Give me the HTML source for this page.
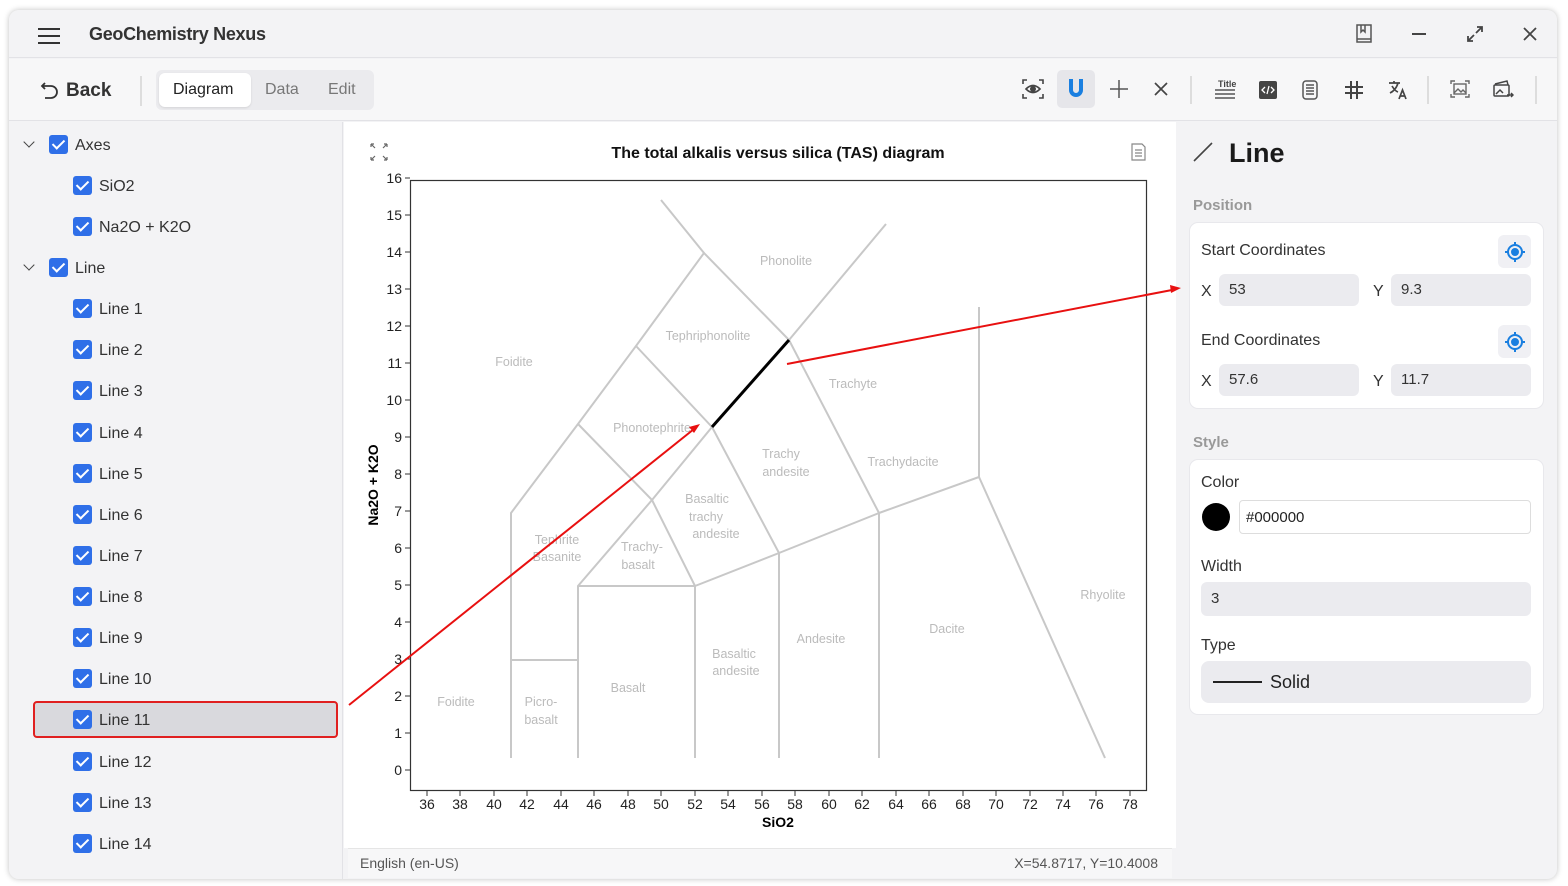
<!DOCTYPE html>
<html><head><meta charset="utf-8"><style>
*{box-sizing:border-box;margin:0;padding:0}
body{width:1568px;height:886px;background:#fff;font-family:"Liberation Sans",sans-serif;position:relative;overflow:hidden;color:#222}
.win{position:absolute;left:9px;top:10px;width:1548px;height:869px;background:#f3f3f5;border-radius:10px;box-shadow:0 0 6px rgba(0,0,0,.25);overflow:hidden}
.abs{position:absolute}
.cb{position:absolute;width:19px;height:19px;background:#2f6fe8;border-radius:3px}
.cb:after{content:"";position:absolute;left:6px;top:2px;width:5px;height:10px;border:solid #fff;border-width:0 2.5px 2.5px 0;transform:rotate(45deg)}
.row{position:absolute;font-size:16px;color:#333;margin-top:2px}
.chev{position:absolute;width:8px;height:8px;border:solid #444;border-width:0 1.8px 1.8px 0;transform:rotate(45deg)}
.inp{position:absolute;background:#ebebef;border-radius:6px;font-size:15px;color:#333;padding-left:10px;line-height:32px}
.lbl{position:absolute;font-size:16px;color:#333;margin-top:1px}
</style></head><body>
<div class="win">
 <div class="abs" style="left:0;top:0;width:1548px;height:48px;background:#f3f3f5;border-bottom:1px solid #e2e2e6"></div>
 <svg class="abs" style="left:28px;top:17px" width="24" height="18"><path d="M1 2h22M1 9h22M1 16h22" stroke="#333" stroke-width="2"/></svg>
 <div class="abs" style="left:80px;top:14px;font-size:18px;font-weight:bold;color:#333;letter-spacing:-0.3px">GeoChemistry Nexus</div>
 <svg class="abs" style="left:1346px;top:14px" width="18" height="20" fill="none" stroke="#555" stroke-width="1.5"><path d="M2 1h14v17H2z M2 15h14 M6 1v7l2-2 2 2V1"/></svg>
 <svg class="abs" style="left:1402px;top:22px" width="16" height="4"><path d="M1 2h14" stroke="#444" stroke-width="2"/></svg>
 <svg class="abs" style="left:1457px;top:15px" width="18" height="18" fill="none" stroke="#444" stroke-width="1.8"><path d="M10 8l6-6M11 2h5v5M8 10l-6 6M2 11v5h5"/></svg>
 <svg class="abs" style="left:1513px;top:16px" width="16" height="16" stroke="#444" stroke-width="1.8"><path d="M2 2l12 12M14 2L2 14"/></svg>
 <div class="abs" style="left:0;top:49px;width:1548px;height:62px;background:#f7f7f8;border-bottom:1px solid #e2e2e6"></div>
 <svg class="abs" style="left:31px;top:70px" width="20" height="20" fill="none" stroke="#333" stroke-width="1.8"><path d="M5 3L2 6l3 3M2 6h9a6 6 0 0 1 0 12H5"/></svg>
 <div class="abs" style="left:57px;top:70px;font-size:19px;font-weight:bold;color:#333">Back</div>
 <div class="abs" style="left:131px;top:66px;width:2px;height:30px;background:#ddd"></div>
 <div class="abs" style="left:147px;top:60px;width:218px;height:40px;background:#ebebee;border-radius:6px"></div>
 <div class="abs" style="left:150px;top:63px;width:92px;height:34px;background:#fff;border-radius:6px;box-shadow:0 1px 2px rgba(0,0,0,.1)"></div>
 <div class="abs" style="left:164px;top:71px;font-size:16px;color:#222">Diagram</div>
 <div class="abs" style="left:256px;top:71px;font-size:16px;color:#777">Data</div>
 <div class="abs" style="left:319px;top:71px;font-size:16px;color:#777">Edit</div>
 <svg class="abs" style="left:1013px;top:69px" width="22" height="20" fill="none" stroke="#444" stroke-width="1.6"><path d="M1 5V1h4M17 1h4v4M21 15v4h-4M5 19H1v-4"/><path d="M4 10q7-7 14 0q-7 7-14 0z"/><circle cx="11" cy="10" r="2.2" fill="#444"/></svg>
 <div class="abs" style="left:1048px;top:60px;width:38px;height:38px;background:#e6e6ea;border-radius:5px"></div>
 <svg class="abs" style="left:1059px;top:69px" width="16" height="20" fill="none" stroke="#1a7fe0" stroke-width="4"><path d="M3 0v11a5 5 0 0 0 10 0V0"/></svg>
 <svg class="abs" style="left:1101px;top:70px" width="18" height="18" stroke="#555" stroke-width="1.5"><path d="M9 0v18M0 9h18"/></svg>
 <svg class="abs" style="left:1145px;top:72px" width="14" height="14" stroke="#444" stroke-width="1.7"><path d="M1 1l12 12M13 1L1 13"/></svg>
 <div class="abs" style="left:1181px;top:66px;width:2px;height:28px;background:#ddd"></div>
 <svg class="abs" style="left:1205px;top:69px" width="22" height="22"><text x="4" y="8" font-size="9" font-family="Liberation Sans" fill="#444" font-weight="bold">Title</text><path d="M1 11h20M1 15h20M1 19h20" stroke="#555" stroke-width="1.5"/></svg>
 <svg class="abs" style="left:1250px;top:71px" width="18" height="18"><rect width="18" height="18" rx="2" fill="#444"/><path d="M6 6l-3 3 3 3M12 6l3 3-3 3M10 5l-2 8" stroke="#fff" stroke-width="1.3" fill="none"/></svg>
 <svg class="abs" style="left:1293px;top:70px" width="16" height="20" fill="none" stroke="#555" stroke-width="1.5"><rect x="1" y="1" width="14" height="18" rx="3"/><path d="M4 5h8M4 8h8M4 11h8M4 14h8"/></svg>
 <svg class="abs" style="left:1336px;top:71px" width="18" height="18" stroke="#444" stroke-width="2"><path d="M6 0v18M12 0v18M0 6h18M0 12h18"/></svg>
 <svg class="abs" style="left:1379px;top:70px" width="20" height="20" fill="none" stroke="#444" stroke-width="1.7"><path d="M1 3h11M6 1v2M10 3q-2 7-8 10M4 6q3 5 6 6"/><path d="M11 19l3.5-9 3.5 9M12.5 16h4"/></svg>
 <div class="abs" style="left:1418px;top:66px;width:2px;height:28px;background:#ddd"></div>
 <svg class="abs" style="left:1441px;top:70px" width="20" height="18" fill="none" stroke="#666" stroke-width="1.4"><path d="M1 4V1h4M15 1h4v3M19 14v3h-4M5 17H1v-3"/><rect x="4" y="4" width="12" height="10"/><path d="M4 13l4-4 3 3 2-2 3 3"/></svg>
 <svg class="abs" style="left:1483px;top:69px" width="22" height="20" fill="none" stroke="#444" stroke-width="1.5"><path d="M3 5l12-3 1 4"/><rect x="2" y="6" width="15" height="11" rx="1"/><path d="M4 15l4-4 3 3"/><path d="M15 16h6M19 14l2 2-2 2"/></svg>
 <div class="abs" style="left:1526px;top:66px;width:2px;height:28px;background:#ddd"></div>
 <div class="abs" style="left:0;top:112px;width:334px;height:757px;background:#f3f3f5;border-right:1px solid #e2e2e6"></div>
 <div class="abs" style="left:24px;top:691px;width:305px;height:37px;background:#d9d9dd;border:2px solid #e02020;border-radius:4px"></div>
</div>
<div class="chev" style="left:25px;top:138px"></div><div class="cb" style="left:49px;top:135px"></div><div class="row" style="left:75px;top:135px">Axes</div>
<div class="cb" style="left:73px;top:176px"></div><div class="row" style="left:99px;top:176px">SiO2</div>
<div class="cb" style="left:73px;top:217px"></div><div class="row" style="left:99px;top:217px">Na2O + K2O</div>
<div class="chev" style="left:25px;top:261px"></div><div class="cb" style="left:49px;top:258px"></div><div class="row" style="left:75px;top:258px">Line</div>
<div class="cb" style="left:73px;top:299px"></div><div class="row" style="left:99px;top:299px">Line 1</div>
<div class="cb" style="left:73px;top:340px"></div><div class="row" style="left:99px;top:340px">Line 2</div>
<div class="cb" style="left:73px;top:381px"></div><div class="row" style="left:99px;top:381px">Line 3</div>
<div class="cb" style="left:73px;top:423px"></div><div class="row" style="left:99px;top:423px">Line 4</div>
<div class="cb" style="left:73px;top:464px"></div><div class="row" style="left:99px;top:464px">Line 5</div>
<div class="cb" style="left:73px;top:505px"></div><div class="row" style="left:99px;top:505px">Line 6</div>
<div class="cb" style="left:73px;top:546px"></div><div class="row" style="left:99px;top:546px">Line 7</div>
<div class="cb" style="left:73px;top:587px"></div><div class="row" style="left:99px;top:587px">Line 8</div>
<div class="cb" style="left:73px;top:628px"></div><div class="row" style="left:99px;top:628px">Line 9</div>
<div class="cb" style="left:73px;top:669px"></div><div class="row" style="left:99px;top:669px">Line 10</div>
<div class="cb" style="left:73px;top:710px"></div><div class="row" style="left:99px;top:710px">Line 11</div>
<div class="cb" style="left:73px;top:752px"></div><div class="row" style="left:99px;top:752px">Line 12</div>
<div class="cb" style="left:73px;top:793px"></div><div class="row" style="left:99px;top:793px">Line 13</div>
<div class="cb" style="left:73px;top:834px"></div><div class="row" style="left:99px;top:834px">Line 14</div>

<div class="abs" style="left:344px;top:122px;width:832px;height:726px;background:#fff"></div>
<div class="abs" style="left:348px;top:848px;width:824px;height:30px;background:#f7f7f8;border-top:1px solid #e5e5e5"></div>
<div class="abs" style="left:360px;top:855px;font-size:14px;color:#555">English (en-US)</div>
<div class="abs" style="left:958px;width:200px;text-align:right;top:855px;font-size:14px;color:#555">X=54.8717, Y=10.4008</div>
<svg class="abs" style="left:344px;top:122px" width="832" height="726" font-family="Liberation Sans">
 <g transform="translate(-344,-122)">
 <path d="M371 144l4 4M371 144h3M371 144v3M387 144l-4 4M387 144h-3M387 144v3M371 160l4-4M371 160h3M371 160v-3M387 160l-4-4M387 160h-3M387 160v-3" stroke="#666" stroke-width="1.2" fill="none"/>
 <path d="M1132 144h10l3 3v13h-13z M1135 150h7M1135 153h7M1135 156h7" stroke="#888" stroke-width="1.2" fill="none"/>
 <text x="778" y="158" font-size="16" font-weight="bold" text-anchor="middle" fill="#111">The total alkalis versus silica (TAS) diagram</text>
 <rect x="410.5" y="180.5" width="736" height="610" fill="none" stroke="#333" stroke-width="1.2"/>
 <g font-size="14" fill="#222" text-anchor="end">
  <text x="402" y="775">0</text><text x="402" y="738">1</text><text x="402" y="701">2</text><text x="402" y="664">3</text><text x="402" y="627">4</text><text x="402" y="590">5</text><text x="402" y="553">6</text><text x="402" y="516">7</text><text x="402" y="479">8</text><text x="402" y="442">9</text><text x="402" y="405">10</text><text x="402" y="368">11</text><text x="402" y="331">12</text><text x="402" y="294">13</text><text x="402" y="257">14</text><text x="402" y="220">15</text><text x="402" y="183">16</text>
 </g>
 <path d="M405 770h5M405 733h5M405 696h5M405 659h5M405 622h5M405 585h5M405 548h5M405 511h5M405 474h5M405 437h5M405 400h5M405 363h5M405 326h5M405 289h5M405 252h5M405 215h5M405 178h5" stroke="#333"/>
 <g font-size="14" fill="#222" text-anchor="middle">
  <text x="427" y="809">36</text><text x="460" y="809">38</text><text x="494" y="809">40</text><text x="527" y="809">42</text><text x="561" y="809">44</text><text x="594" y="809">46</text><text x="628" y="809">48</text><text x="661" y="809">50</text><text x="695" y="809">52</text><text x="728" y="809">54</text><text x="762" y="809">56</text><text x="795" y="809">58</text><text x="829" y="809">60</text><text x="862" y="809">62</text><text x="896" y="809">64</text><text x="929" y="809">66</text><text x="963" y="809">68</text><text x="996" y="809">70</text><text x="1030" y="809">72</text><text x="1063" y="809">74</text><text x="1096" y="809">76</text><text x="1130" y="809">78</text>
 </g>
 <path d="M427 791v5M460 791v5M494 791v5M527 791v5M561 791v5M594 791v5M628 791v5M661 791v5M695 791v5M728 791v5M762 791v5M795 791v5M829 791v5M862 791v5M896 791v5M929 791v5M963 791v5M996 791v5M1030 791v5M1063 791v5M1096 791v5M1130 791v5" stroke="#333"/>
 <text x="778" y="827" font-size="14" font-weight="bold" text-anchor="middle">SiO2</text>
 <text transform="translate(378,485) rotate(-90)" font-size="14" font-weight="bold" text-anchor="middle">Na2O + K2O</text>
 <g stroke="#c8c8c8" stroke-width="2" fill="none">
  <path d="M511 758V513L578 424L636 346L704 253L789 340"/>
  <path d="M661 200L704 253"/>
  <path d="M789 340L886 224"/>
  <path d="M578 424L652 500L712 427L636 346"/>
  <path d="M511 660H578"/>
  <path d="M578 758V586L652 500"/>
  <path d="M578 586H695V758"/>
  <path d="M652 500L695 586L779 553L712 427"/>
  <path d="M779 758V553L879 513L789 340"/>
  <path d="M879 758V513L979 477V307"/>
  <path d="M979 477L1105 758"/>
 </g>
 <path d="M712 427L789 340" stroke="#000" stroke-width="3"/>
 <g font-size="12.5" fill="#bbb" text-anchor="middle">
  <text x="786" y="265">Phonolite</text><text x="708" y="340">Tephriphonolite</text><text x="514" y="366">Foidite</text>
  <text x="853" y="388">Trachyte</text><text x="652" y="432">Phonotephrite</text>
  <text x="781" y="458">Trachy</text><text x="786" y="476">andesite</text><text x="903" y="466">Trachydacite</text>
  <text x="707" y="503">Basaltic</text><text x="706" y="521">trachy</text><text x="716" y="538">andesite</text>
  <text x="557" y="544">Tephrite</text><text x="557" y="561">Basanite</text><text x="642" y="551">Trachy-</text><text x="638" y="569">basalt</text>
  <text x="1103" y="599">Rhyolite</text><text x="947" y="633">Dacite</text><text x="821" y="643">Andesite</text>
  <text x="734" y="658">Basaltic</text><text x="736" y="675">andesite</text><text x="628" y="692">Basalt</text>
  <text x="456" y="706">Foidite</text><text x="541" y="706">Picro-</text><text x="541" y="724">basalt</text>
 </g>
 </g>
</svg>
<svg class="abs" style="left:0;top:0" width="1568" height="886">
 <path d="M349 705L694 429" stroke="#e81010" stroke-width="2"/><path d="M700 424l-11 3 5 6z" fill="#e81010"/>
 <path d="M787 364L1172 290" stroke="#e81010" stroke-width="2"/><path d="M1181 288l-11-3 1 8z" fill="#e81010"/>
</svg>

<svg class="abs" style="left:1192px;top:141px" width="22" height="22"><path d="M2 20L20 2" stroke="#444" stroke-width="1.6"/></svg>
<div class="abs" style="left:1229px;top:138px;font-size:27px;font-weight:bold;color:#1a1a1a">Line</div>
<div class="abs" style="left:1193px;top:197px;font-size:15px;font-weight:bold;color:#999">Position</div>
<div class="abs" style="left:1189px;top:222px;width:355px;height:187px;background:#fff;border:1px solid #e8e8ec;border-radius:9px"></div>
<div class="lbl" style="left:1201px;top:241px">Start Coordinates</div>
<div class="abs" style="left:1498px;top:235px;width:33px;height:33px;background:#f0f0f4;border-radius:6px"></div>
<svg class="abs" style="left:1504px;top:241px" width="22" height="22" fill="none" stroke="#1a7fe0" stroke-width="2"><circle cx="11" cy="11" r="7"/><circle cx="11" cy="11" r="3" fill="#1a7fe0"/><path d="M11 1v3M11 18v3M1 11h3M18 11h3"/></svg>
<div class="lbl" style="left:1201px;top:282px">X</div><div class="inp" style="left:1219px;top:274px;width:140px">53</div>
<div class="lbl" style="left:1373px;top:282px">Y</div><div class="inp" style="left:1391px;top:274px;width:140px">9.3</div>
<div class="lbl" style="left:1201px;top:331px">End Coordinates</div>
<div class="abs" style="left:1498px;top:325px;width:33px;height:33px;background:#f0f0f4;border-radius:6px"></div>
<svg class="abs" style="left:1504px;top:331px" width="22" height="22" fill="none" stroke="#1a7fe0" stroke-width="2"><circle cx="11" cy="11" r="7"/><circle cx="11" cy="11" r="3" fill="#1a7fe0"/><path d="M11 1v3M11 18v3M1 11h3M18 11h3"/></svg>
<div class="lbl" style="left:1201px;top:372px">X</div><div class="inp" style="left:1219px;top:364px;width:140px">57.6</div>
<div class="lbl" style="left:1373px;top:372px">Y</div><div class="inp" style="left:1391px;top:364px;width:140px">11.7</div>
<div class="abs" style="left:1193px;top:434px;font-size:15px;font-weight:bold;color:#999">Style</div>
<div class="abs" style="left:1189px;top:459px;width:355px;height:256px;background:#fff;border:1px solid #e8e8ec;border-radius:9px"></div>
<div class="lbl" style="left:1201px;top:473px">Color</div>
<div class="abs" style="left:1202px;top:503px;width:28px;height:28px;border-radius:50%;background:#000"></div>
<div class="abs" style="left:1239px;top:500px;width:292px;height:34px;border:1px solid #ddd;border-radius:4px;font-size:15px;line-height:34px;padding-left:6px;color:#222">#000000</div>
<div class="lbl" style="left:1201px;top:557px">Width</div>
<div class="inp" style="left:1201px;top:582px;width:330px;line-height:34px">3</div>
<div class="lbl" style="left:1201px;top:636px">Type</div>
<div class="abs" style="left:1201px;top:661px;width:330px;height:42px;background:#ebebef;border-radius:8px"></div>
<div class="abs" style="left:1213px;top:681px;width:49px;height:2px;background:#222"></div>
<div class="abs" style="left:1270px;top:672px;font-size:18px;color:#222">Solid</div>
</body></html>
